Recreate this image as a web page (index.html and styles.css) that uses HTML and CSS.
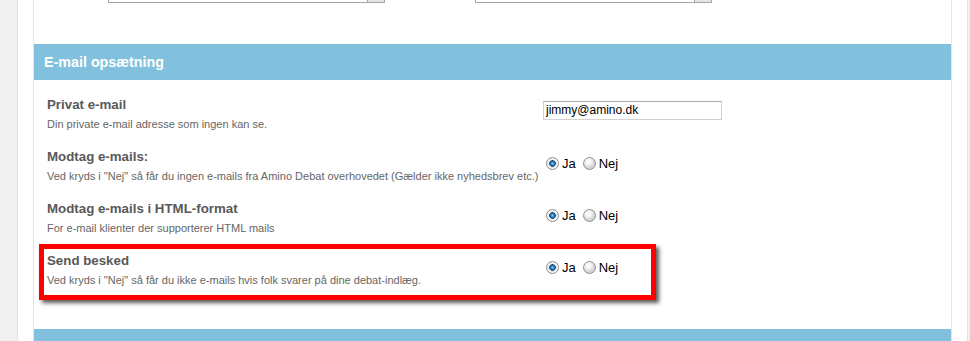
FILE: index.html
```html
<!DOCTYPE html>
<html lang="da">
<head>
  <meta charset="UTF-8" />
  <title>E-mail opsætning</title>
  <link rel="stylesheet" href="styles.css">
</head>
<body>
  <div class="page">
    <div class="section">
      <div class="fields">
        <div class="select"><span class="arrow"></span></div>
        <div class="select short"><span class="arrow"></span></div>
      </div>

      <h3 class="section-head">E-mail opsætning</h3>

      <div class="rows">
        <div class="row">
          <div class="info">
            <div class="title">Privat e-mail</div>
            <div class="desc">Din private e-mail adresse som ingen kan se.</div>
          </div>
          <div class="value">
            <input type="text" class="text" value="jimmy@amino.dk">
          </div>
        </div>

        <div class="row">
          <div class="info">
            <div class="title">Modtag e-mails:</div>
            <div class="desc">Ved kryds i "Nej" så får du ingen e-mails fra Amino Debat overhovedet (Gælder ikke nyhedsbrev etc.)</div>
          </div>
          <div class="value choices">
            <input type="radio" class="radio" name="mails" id="mails-ja" checked><label for="mails-ja">Ja</label>
            <input type="radio" class="radio" name="mails" id="mails-nej"><label for="mails-nej">Nej</label>
          </div>
        </div>

        <div class="row">
          <div class="info">
            <div class="title">Modtag e-mails i HTML-format</div>
            <div class="desc">For e-mail klienter der supporterer HTML mails</div>
          </div>
          <div class="value choices">
            <input type="radio" class="radio" name="html" id="html-ja" checked><label for="html-ja">Ja</label>
            <input type="radio" class="radio" name="html" id="html-nej"><label for="html-nej">Nej</label>
          </div>
        </div>

        <div class="row marked">
          <span class="mark"></span>
          <div class="info">
            <div class="title">Send besked</div>
            <div class="desc">Ved kryds i "Nej" så får du ikke e-mails hvis folk svarer på dine debat-indlæg.</div>
          </div>
          <div class="value choices">
            <input type="radio" class="radio" name="besked" id="besked-ja" checked><label for="besked-ja">Ja</label>
            <input type="radio" class="radio" name="besked" id="besked-nej"><label for="besked-nej">Nej</label>
          </div>
        </div>
      </div>

      <h3 class="section-head"></h3>
    </div>
  </div>
</body>
</html>
```

FILE: styles.css
```css
html, body { height: 100%; }
body {
  margin: 0;
  background-color: #f0f0f0;
  font-family: "Liberation Sans", Arial, sans-serif;
  overflow: hidden;
}
.page {
  width: 919px;
  height: 100%;
  overflow: hidden;
  margin-left: 17px;
  padding: 0 15px;
  background-color: #fff;
  border-left: 1px solid #e2e2e2;
  border-right: 1px solid #e2e2e2;
}
.section {
  border-left: 1px solid #e6e6e6;
  border-right: 1px solid #e6e6e6;
}
.fields {
  display: flex;
  gap: 90px;
  height: 3px;
  padding-left: 74px;
  margin-bottom: 41px;
}
.select {
  display: flex;
  width: 275px;
  height: 2px;
  border: 1px solid #a3a6ad;
  border-top: none;
}
.select.short { width: 235px; }
.select .arrow {
  margin-left: auto;
  width: 16px;
  border-left: 1px solid #a3a6ad;
  background-color: #e4e4e4;
}
.section-head {
  margin: 0;
  height: 36px;
  line-height: 36px;
  padding-left: 10px;
  background-color: #82c1dd;
  color: #fff;
  font-size: 14.3px;
  font-weight: bold;
}
.rows {
  padding: 17px 0 24px;
}
.row {
  position: relative;
  display: flex;
  height: 52px;
  padding-left: 13px;
}
.info {
  width: 496px;
}
.title {
  height: 16px;
  line-height: 16px;
  font-size: 13.3px;
  font-weight: bold;
  color: #595959;
}
.desc {
  margin-top: 4px;
  line-height: 14px;
  font-size: 11px;
  color: #666;
  white-space: nowrap;
}
.value {
  padding-top: 3px;
}
input.text {
  box-sizing: border-box;
  width: 179px;
  height: 19px;
  margin: 0;
  padding: 1px 2px;
  border: 1px solid #d2d2d2;
  border-top-color: #a9a9a9;
  font-family: "Liberation Sans", Arial, sans-serif;
  font-size: 12px;
  color: #000;
}
.choices {
  display: flex;
  align-items: center;
  height: 15px;
  padding-top: 7px;
  padding-left: 3px;
  font-size: 13px;
  color: #000;
}
.choices label {
  margin-right: 7px;
}
input.radio {
  appearance: none;
  -webkit-appearance: none;
  box-sizing: border-box;
  width: 13px;
  height: 13px;
  margin: 0 3px 0 0;
  border: 1px solid #8e8f8f;
  border-radius: 50%;
  background: radial-gradient(circle at 40% 35%, #fff 0, #f2f2f2 3px, #d3d3d3 6px);
}
input.radio:checked {
  background: radial-gradient(circle at 50% 50%, #8fd0f6 0, #2f86c6 1.5px, #0f4d86 3px, #e6e6e6 3.6px, #f6f6f6 5px, #d8d8d8 6px);
}
.mark {
  position: absolute;
  left: 5px;
  top: -9px;
  width: 617px;
  height: 56px;
  box-sizing: border-box;
  border: 5px solid #ff0000;
  box-shadow: 3px 3px 4px rgba(0, 0, 0, 0.65);
  pointer-events: none;
}
```
